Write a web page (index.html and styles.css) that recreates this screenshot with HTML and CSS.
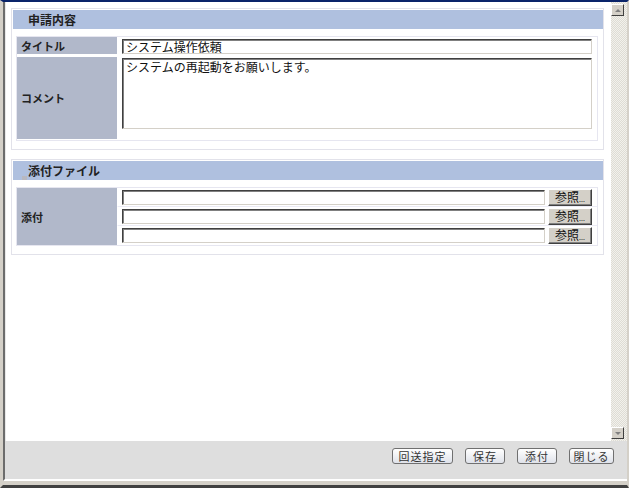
FILE: index.html
```html
<!DOCTYPE html>
<html lang="ja">
<head>
  <meta charset="UTF-8" />
  <title>申請内容</title>
  <link rel="stylesheet" href="styles.css">
</head>
<body>
  <div class="window">
    <div class="main">
      <div class="content">
        <div class="panel">
          <div class="panel-head">申請内容</div>
          <div class="panel-body">
            <div class="form">
              <div class="label row-title">タイトル</div>
              <div class="value row-title">
                <div class="field title-field">システム操作依頼</div>
              </div>
              <div class="label row-comment">コメント</div>
              <div class="value row-comment">
                <div class="field comment-field">システムの再起動をお願いします。</div>
              </div>
            </div>
          </div>
        </div>

        <div class="panel panel-files">
          <div class="panel-head"><span class="mark"></span>添付ファイル</div>
          <div class="panel-body">
            <div class="form files">
              <div class="label files-label">添付</div>
              <div class="value file-row">
                <div class="field file-field"></div>
                <button class="browse">参照<span class="dots">...</span></button>
              </div>
              <div class="value file-row">
                <div class="field file-field"></div>
                <button class="browse">参照<span class="dots">...</span></button>
              </div>
              <div class="value file-row last">
                <div class="field file-field"></div>
                <button class="browse">参照<span class="dots">...</span></button>
              </div>
            </div>
          </div>
        </div>
      </div>

      <div class="scrollbar">
        <div class="scroll-btn up"><span class="arrow-up"></span></div>
        <div class="scroll-track"></div>
        <div class="scroll-btn down"><span class="arrow-down"></span></div>
      </div>
    </div>

    <div class="footer">
      <button class="action wide">回送指定</button>
      <button class="action">保存</button>
      <button class="action">添付</button>
      <button class="action close">閉じる</button>
    </div>
  </div>
</body>
</html>
```

FILE: styles.css
```css
body {
  margin: 0;
  padding: 0;
  font-family: "Noto Sans CJK JP", "DejaVu Sans", sans-serif;
  font-size: 12px;
  color: #111;
  background: #d4d0c8;
}

.window {
  width: 629px;
  height: 488px;
  box-sizing: border-box;
  border-top: 2px solid #0a246a;
  border-left: 3px solid #d4d0c8;
  border-right: 2px solid #d4d0c8;
  border-bottom: 3px solid #404040;
  display: flex;
  flex-direction: column;
  background: #d4d0c8;
}

.main {
  display: flex;
  flex-shrink: 0;
  height: 439px;
  border-left: 2px solid #6c6c6c;
}

.content {
  flex: 1;
  background: #fff;
  padding: 6px 7px 0 5px;
  border-left: 1px solid #e8e8e8;
}

.panel {
  border: 1px solid #e2e2ea;
  padding: 1px 0 0 1px;
}

.panel-files {
  margin-top: 9px;
}

.panel-head {
  height: 19px;
  line-height: 19px;
  background: #afc0df;
  padding-left: 15px;
  font-weight: bold;
  color: #222;
  position: relative;
}

.mark {
  position: absolute;
  left: 9px;
  bottom: 0;
  width: 5px;
  height: 4px;
  background: #b8b8c0;
}

.panel-body {
  padding: 7px 5px 8px 3px;
}

.form {
  display: grid;
  grid-template-columns: 100px 1fr;
  row-gap: 2px;
  border: 1px solid #e6e6f0;
}

.label {
  background: #b1b8ca;
  font-size: 11px;
  font-weight: bold;
  color: #222;
  padding-left: 4px;
  display: flex;
  align-items: center;
}

.value {
  padding: 1px 5px 0 4px;
  border-left: 1px solid #fff;
}

.row-title {
  height: 17px;
}

.row-comment {
  height: 82px;
}

.field {
  box-sizing: border-box;
  background: #fff;
  border: 1px solid;
  border-color: #404040 #d4d0c8 #d4d0c8 #404040;
  box-shadow: inset 1px 1px 0 #808080;
  padding: 0 3px;
  font-size: 12px;
  line-height: 13px;
}

.title-field {
  height: 15px;
  margin-top: 1px;
}

.comment-field {
  height: 71px;
  padding-top: 1px;
}

.files {
  row-gap: 0;
}

.files-label {
  grid-row: 1 / span 3;
}

.file-row {
  display: flex;
  align-items: flex-start;
  gap: 3px;
  height: 19px;
  padding-top: 1px;
  box-sizing: border-box;
  border-bottom: 1px solid #ececf6;
}

.file-row.last {
  border-bottom: 0;
}

.file-field {
  width: 423px;
  height: 15px;
  margin-top: 1px;
}

.browse {
  width: 44px;
  height: 17px;
  padding: 0 0 0 6px;
  text-align: left;
  font-family: inherit;
  font-size: 12px;
  line-height: 14px;
  color: #111;
  background: #d4d0c8;
  border: 1px solid;
  border-color: #fff #404040 #404040 #fff;
  box-shadow: inset -1px -1px 0 #808080;
}

.dots {
  font-size: 7px;
  letter-spacing: 0;
}

.scrollbar {
  width: 16px;
  display: flex;
  flex-direction: column;
  background: repeating-conic-gradient(#f2f1ec 0 25%, #dedcd4 0 50%) 0 0 / 2px 2px;
}

.scroll-btn {
  width: 13px;
  height: 12px;
  box-sizing: border-box;
  background: #d4d0c8;
  border: 1px solid;
  border-color: #fff #404040 #404040 #fff;
  display: flex;
  align-items: center;
  justify-content: center;
}

.scroll-btn.up {
  margin-top: 2px;
}

.scroll-btn.down {
  margin-bottom: 2px;
}

.scroll-track {
  flex: 1;
}

.arrow-up {
  width: 0;
  height: 0;
  border-left: 3px solid transparent;
  border-right: 3px solid transparent;
  border-bottom: 3px solid #808080;
}

.arrow-down {
  width: 0;
  height: 0;
  border-left: 3px solid transparent;
  border-right: 3px solid transparent;
  border-top: 3px solid #808080;
}

.footer {
  flex-shrink: 0;
  height: 40px;
  box-sizing: border-box;
  background: #dedede;
  border-left: 2px solid #6c6c6c;
  border-bottom: 2px solid #fff;
  display: flex;
  justify-content: flex-end;
  align-items: flex-start;
  gap: 12px;
  padding: 7px 13px 0 0;
}

.action {
  width: 40px;
  height: 16px;
  padding: 0;
  font-family: inherit;
  font-size: 11px;
  line-height: 13px;
  letter-spacing: 1px;
  color: #333;
  background: linear-gradient(#ffffff, #dfe2ea);
  border: 1px solid #707070;
  border-radius: 3px;
}

.action.wide {
  width: 61px;
}

.action.close {
  width: 45px;
}
```
